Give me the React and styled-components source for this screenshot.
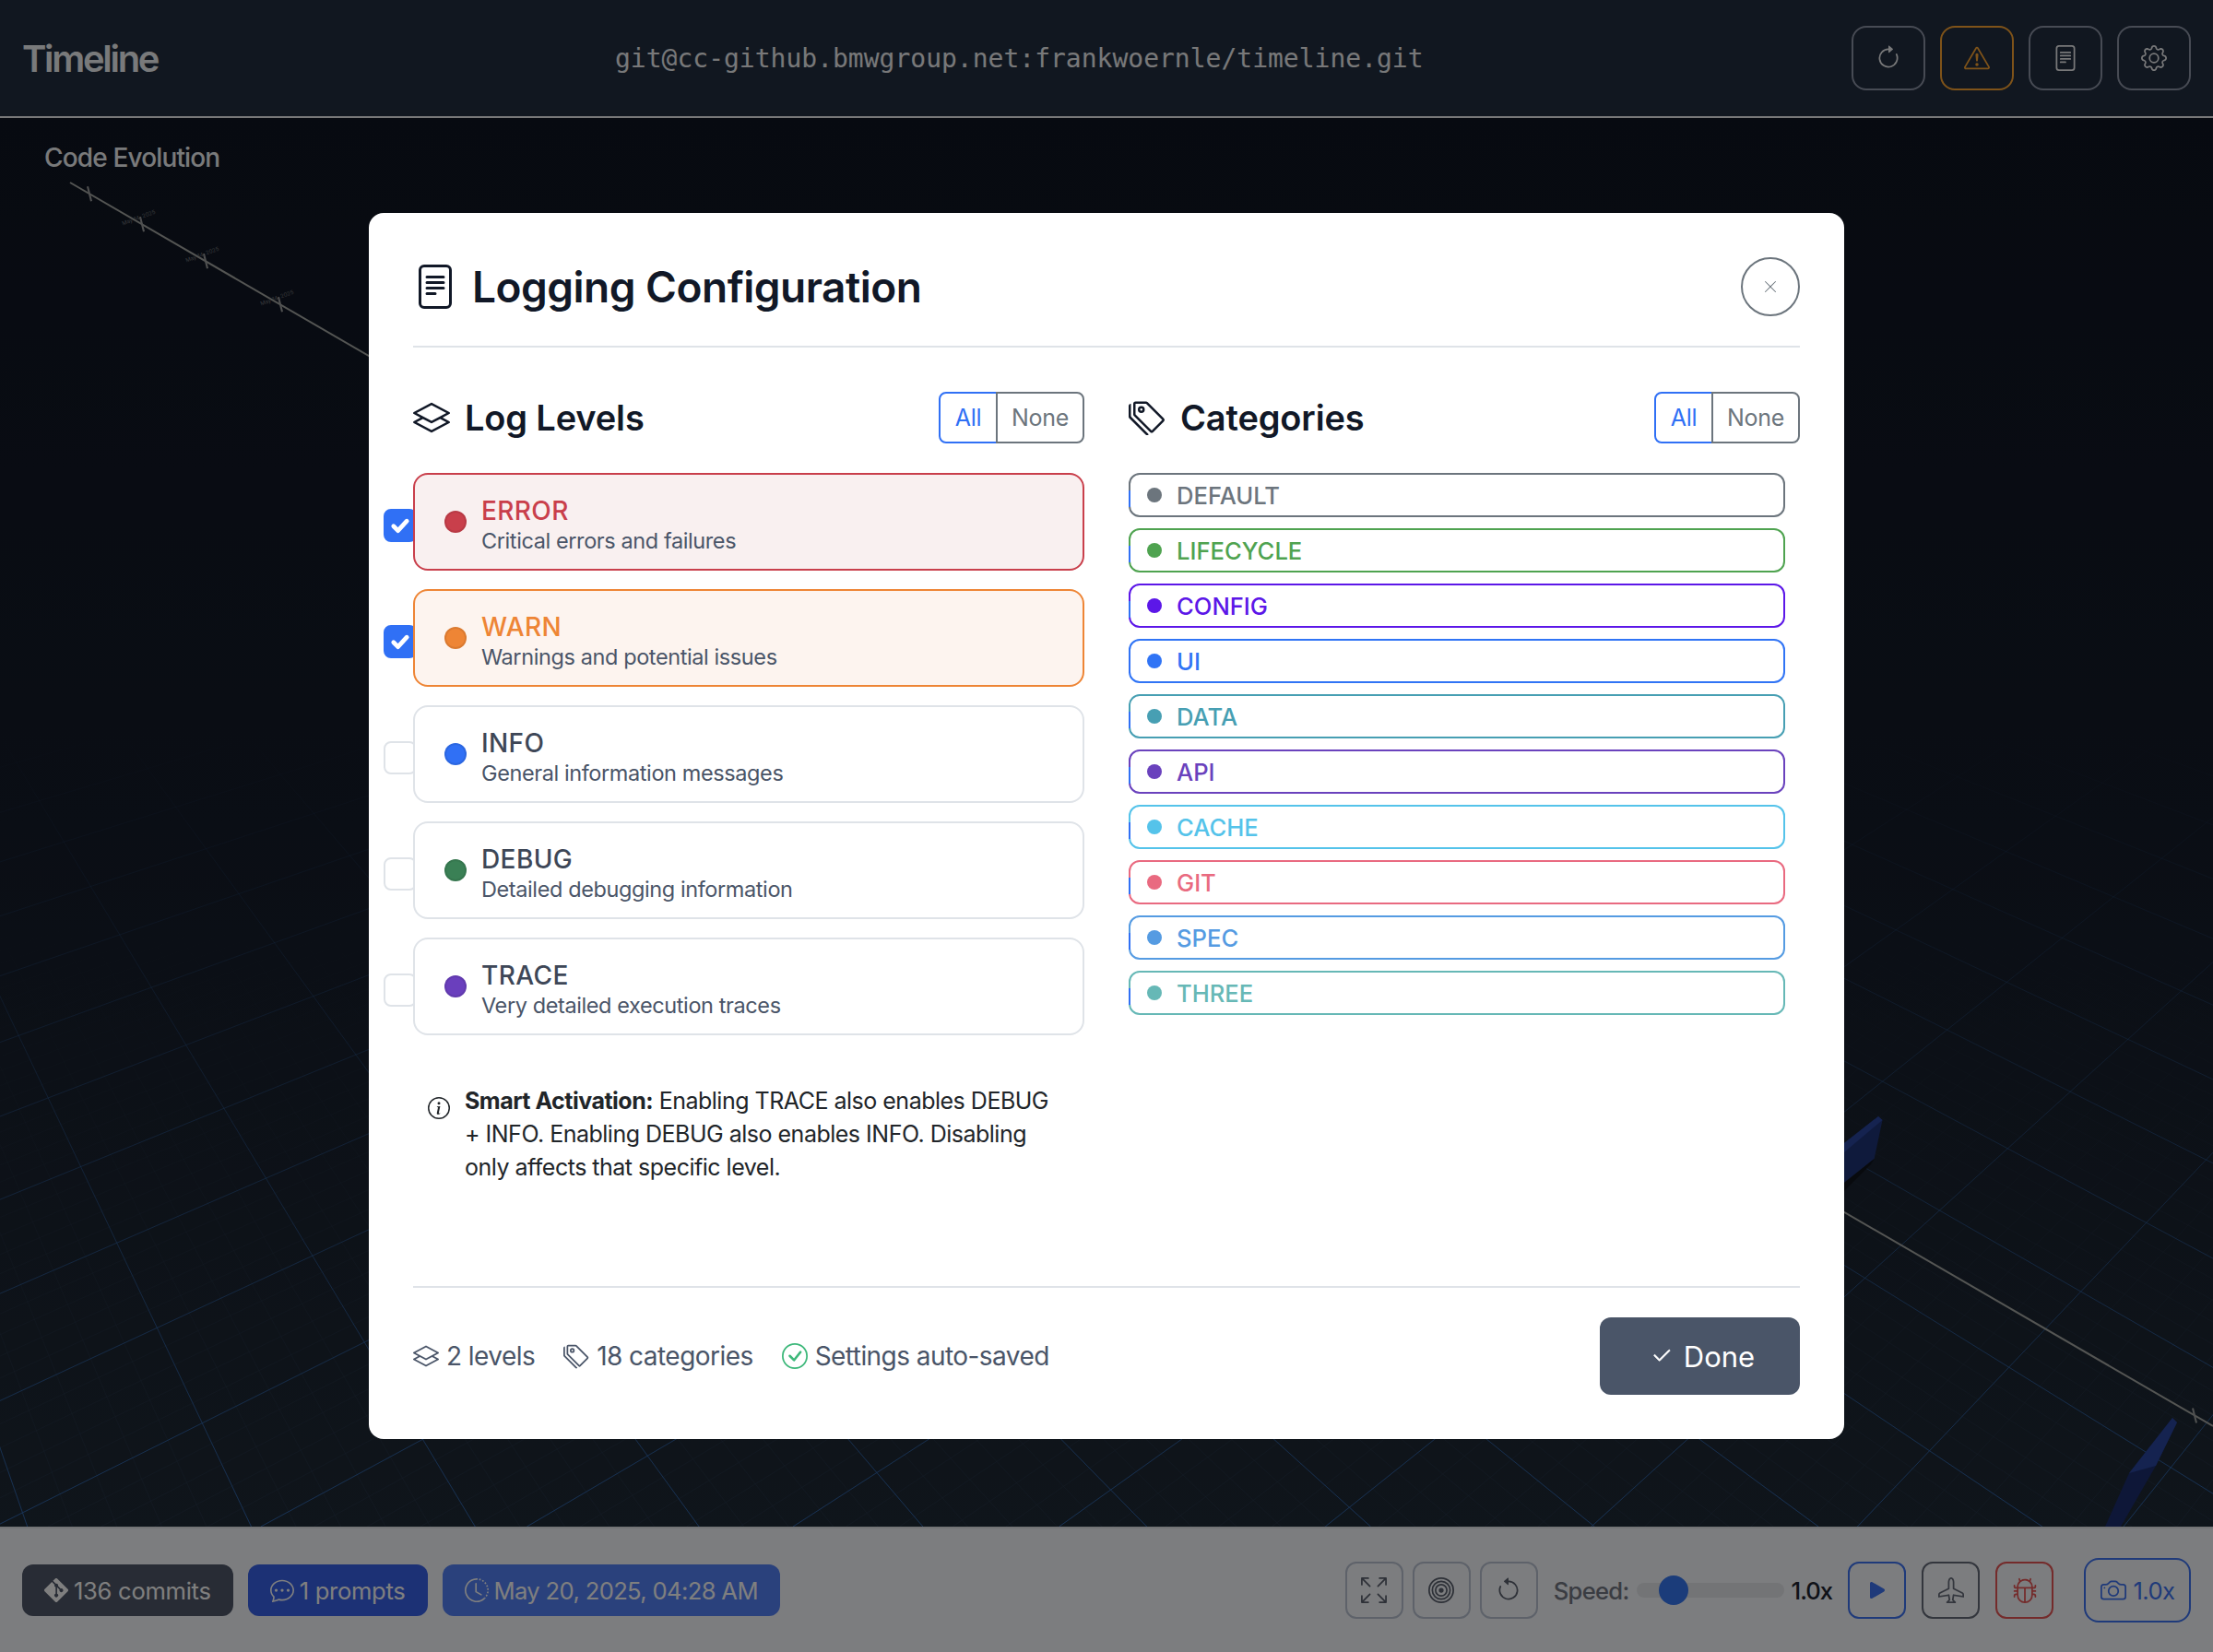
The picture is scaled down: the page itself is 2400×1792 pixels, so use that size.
import React from 'react';
import styled, { createGlobalStyle } from 'styled-components';
import {
  BsArrowClockwise, BsExclamationTriangle, BsFileText, BsGear, BsLayers, BsTags, BsInfoCircle,
  BsCheck2, BsCheckCircle, BsXLg, BsGit, BsChatDots, BsClockHistory, BsArrowsFullscreen, BsBullseye,
  BsArrowCounterclockwise, BsPlayFill, BsAirplane, BsBug, BsCamera,
} from 'react-icons/bs';

const Global = createGlobalStyle`
  *, *::before, *::after { box-sizing: border-box; }
  html, body { margin: 0; padding: 0; background: #0f1522; }
  body { font-family: Inter, "Noto Sans", sans-serif; }
`;

const Page = styled.div`
  width: 2400px; height: 1792px; display: flex; flex-direction: column; overflow: hidden; position: relative;
`;
const Header = styled.header`
  height: 128px; flex: none; display: flex; align-items: center; padding: 0 24px;
  background: #222e40; border-bottom: 2px solid #f0f1f3;
`;
const Brand = styled.h1`
  margin: 0; width: 147px; white-space: nowrap; font-size: 40px; font-weight: 600; letter-spacing: -2.3px; color: #f3f4f6;
`;
const RepoUrl = styled.div`
  margin-left: 496px; font-family: "DejaVu Sans Mono", "Liberation Mono", monospace; font-size: 28px; color: #f0f1f3;
`;
const HeaderActions = styled.div`
  margin-left: auto; display: flex; gap: 16px;
`;
const HeaderButton = styled.div`
  width: 80px; height: 70px; display: flex; align-items: center; justify-content: center;
  border: 2px solid ${p => p.$border || '#8f96a8'}; border-radius: 16px; color: ${p => p.$color || '#f0f1f3'};
`;
const Stage = styled.main`
  flex: 1; position: relative; background: linear-gradient(180deg, #0f1522 0%, #151c2a 50%, #1f2a36 100%);
`;
const StageLabel = styled.div`
  position: absolute; left: 48px; top: 26px; font-size: 28px; line-height: 34px; font-weight: 500; letter-spacing: -0.85px; color: #f3f4f6;
`;
const StageArt = styled.svg`
  position: absolute; inset: 0; width: 100%; height: 100%; display: block;
`;
const BottomBar = styled.footer`
  height: 136px; flex: none; display: flex; align-items: center; justify-content: space-between; padding: 0 24px;
  background: #f8fafe; border-top: 2px solid #e6e8ec;
`;
const PillRow = styled.div`
  display: flex; gap: 16px;
`;
const Pill = styled.div`
  height: 56px; display: flex; align-items: center; gap: 6px; padding: 0 24px; border-radius: 12px;
  background: ${p => p.$bg}; color: #fff; font-size: 25.6px; letter-spacing: -0.3px; white-space: nowrap;
`;
const PillDate = styled(Pill)`
  letter-spacing: -0.65px;
`;
const Controls = styled.div`
  display: flex; align-items: center; gap: 17px;
`;
const ToolGroup = styled.div`
  display: flex; gap: 10px;
`;
const ToolButton = styled.div`
  width: 63px; height: 62px; display: flex; align-items: center; justify-content: center; border-radius: 12px;
  border: 2px solid ${p => p.$border || '#bcc5d4'}; color: ${p => p.$color || '#5c6270'};
`;
const SpeedGroup = styled.div`
  display: flex; align-items: center; gap: 8px; font-size: 25.6px;
`;
const SpeedLabel = styled.span`
  color: #747884; font-weight: 500; letter-spacing: -0.7px;
`;
const SpeedValue = styled.span`
  color: #202430; font-weight: 500; letter-spacing: -1px;
`;
const SliderTrack = styled.div`
  position: relative; width: 160px; height: 16px; border-radius: 8px; background: #e6e8ec;
`;
const SliderThumb = styled.div`
  position: absolute; left: 24px; top: -8px; width: 32px; height: 32px; border-radius: 50%; background: #3678f4;
`;
const CameraButton = styled.div`
  width: 116px; height: 70px; margin-left: 16px; display: flex; align-items: center; justify-content: center; gap: 8px;
  border: 2px solid #3e74f4; border-radius: 16px; color: #3e74f4; font-size: 25.6px; letter-spacing: -0.6px;
`;

const Overlay = styled.div`
  position: fixed; left: 0; top: 0; width: 2400px; height: 1792px; display: flex; align-items: center; justify-content: center;
  background: rgba(0, 0, 0, 0.5);
`;
const Modal = styled.section`
  width: 1600px; height: 1330px; padding: 48px; display: flex; flex-direction: column; background: #fff; border-radius: 16px;
`;
const ModalHead = styled.div`
  display: flex; align-items: center; justify-content: space-between; padding-bottom: 32px; border-bottom: 2px solid #dfe3e8;
`;
const ModalTitle = styled.h2`
  margin: 0; display: flex; align-items: center; gap: 16px; font-size: 46px; font-weight: 600; letter-spacing: -0.5px; color: #111827;
`;
const CloseButton = styled.div`
  width: 64px; height: 64px; display: flex; align-items: center; justify-content: center; border-radius: 50%;
  border: 2px solid #6c757d; color: #6c757d;
`;
const Columns = styled.div`
  margin-top: 48px; display: grid; grid-template-columns: 728px 728px; gap: 48px;
`;
const ColumnHead = styled.div`
  height: 56px; margin-bottom: 32px; display: flex; align-items: center; justify-content: space-between;
`;
const ColumnTitle = styled.h3`
  margin: 0; display: flex; align-items: center; gap: 16px; font-size: 38px; font-weight: 600; letter-spacing: -0.15px; color: #111827;
`;
const Toggle = styled.div`
  display: flex; height: 56px; font-size: 25px; letter-spacing: -0.3px;
`;
const ToggleAll = styled.div`
  width: 64px; display: flex; align-items: center; justify-content: center; color: #3070f5;
  border: 2px solid #3070f5; border-radius: 8px 0 0 8px;
`;
const ToggleNone = styled.div`
  width: 96px; margin-left: -2px; display: flex; align-items: center; justify-content: center; color: #6c757d;
  border: 2px solid #6c757d; border-radius: 0 8px 8px 0;
`;
const LevelList = styled.div`
  display: flex; flex-direction: column; gap: 20px;
`;
const LevelRow = styled.div`
  position: relative;
`;
const Checkbox = styled.div`
  position: absolute; left: -32px; top: 39px; width: 36px; height: 36px; border-radius: 8px;
  display: flex; align-items: center; justify-content: center;
  background: ${p => (p.$on ? '#3070f5' : '#fff')}; border: 2px solid ${p => (p.$on ? '#3070f5' : '#dfe3e8')};
`;
const LevelCard = styled.div`
  position: relative; height: 106px; display: flex; align-items: center; gap: 16px; padding: 0 32px;
  border-radius: 16px; border: 2px solid ${p => (p.$on ? p.$color : '#dfe3e8')}; background: ${p => (p.$on ? p.$tint : '#fff')};
`;
const LevelDot = styled.span`
  width: 24px; height: 24px; flex: none; border-radius: 50%; background: ${p => p.$color}; border: 2px solid rgba(0, 0, 0, 0.08);
`;
const LevelText = styled.div`
  display: flex; flex-direction: column; padding-top: 6px;
`;
const LevelName = styled.div`
  font-size: 28px; line-height: 36px; font-weight: 500; letter-spacing: 0.4px; color: ${p => (p.$on ? p.$color : '#3e4757')};
`;
const LevelDesc = styled.div`
  font-size: 23.5px; line-height: 30px; letter-spacing: -0.4px; color: #4a5568;
`;
const InfoNote = styled.div`
  margin-top: 53px; padding: 0 26px 0 16px; display: flex; gap: 16px; color: #212529; font-size: 25px; line-height: 36px; letter-spacing: -0.5px;
`;
const InfoIcon = styled.span`
  flex: none; margin-top: 14px; height: 24px; display: flex; color: #212529;
`;
const InfoText = styled.p`
  margin: 0;
  strong { font-weight: 700; }
`;
const CategoryList = styled.div`
  display: flex; flex-direction: column; gap: 12px; padding-right: 16px;
`;
const CategoryItem = styled.div`
  position: relative; height: 48px; display: flex; align-items: center; gap: 16px; padding-left: 18px;
  border: 2px solid ${p => p.$color}; border-radius: 12px; color: ${p => p.$color}; font-size: 25.6px; font-weight: 500;
  &::before {
    content: ''; position: absolute; left: -2px; top: 17px; width: 2px; height: 18px; background: #3070f5;
  }
`;
const CategoryDot = styled.span`
  width: 16px; height: 16px; flex: none; border-radius: 50%; background: ${p => p.$color};
`;
const ModalFoot = styled.div`
  margin-top: auto; padding-top: 32px; border-top: 2px solid #dfe3e8; display: flex; align-items: center; justify-content: space-between;
`;
const Stats = styled.div`
  display: flex; align-items: center; gap: 31px; color: #4a5568; font-size: 28px; letter-spacing: -0.55px;
`;
const Stat = styled.span`
  display: flex; align-items: center; gap: 8px;
  svg { color: ${p => p.$icon || 'inherit'}; }
`;
const DoneButton = styled.div`
  width: 217px; height: 84px; padding-left: 6px; display: flex; align-items: center; justify-content: center; gap: 12px;
  background: #4a5568; color: #fff; border-radius: 12px; font-size: 31px;
  svg { stroke: currentColor; stroke-width: 0.6px; }
`;

const Tick = ({ size = 20 }) => (
  <svg width={size} height={size} viewBox="0 0 20 20" fill="none">
    <path d="M5.5 10.5l3 3 6-6.5" stroke="#fff" strokeWidth="3" strokeLinecap="round" strokeLinejoin="round" />
  </svg>
);

const BOTTOM = 1656, HORIZON = -260;
const range = (a, b) => Array.from({ length: b - a + 1 }, (_, i) => a + i);

function GridLines({ vx, base, step, k0, k1, stroke, width }) {
  return range(k0, k1).map(k => (
    <line key={k} x1={vx} y1={HORIZON} x2={base + k * step} y2={BOTTOM} stroke={stroke} strokeWidth={width} />
  ));
}

const TL = (x) => 198 + (x - 76) * 0.5805;
const TICKS = [97, 154, 223, 304, 2380];
const LABELLED = [154, 223, 304];

function StageBackground() {
  return (
    <StageArt viewBox="0 128 2400 1528" preserveAspectRatio="none">
      <defs>
        <linearGradient id="majorGrid" gradientUnits="userSpaceOnUse" x1="0" y1="800" x2="0" y2="1656">
          <stop offset="0" stopColor="#2a5a9a" stopOpacity="0" />
          <stop offset="0.25" stopColor="#2a5a9a" stopOpacity="0.25" />
          <stop offset="1" stopColor="#2f66ad" stopOpacity="0.95" />
        </linearGradient>
        <linearGradient id="minorGrid" gradientUnits="userSpaceOnUse" x1="0" y1="1000" x2="0" y2="1656">
          <stop offset="0" stopColor="#2a3a50" stopOpacity="0" />
          <stop offset="1" stopColor="#2a3a50" stopOpacity="0.5" />
        </linearGradient>
        <clipPath id="floor"><rect x="0" y="800" width="2400" height="856" /></clipPath>
      </defs>
      <g clipPath="url(#floor)">
        <GridLines vx={-635} base={515.3} step={48.56} k0={-25} k1={100} stroke="url(#minorGrid)" width={1} />
        <GridLines vx={3835} base={571.4} step={57.72} k0={-150} k1={40} stroke="url(#minorGrid)" width={1} />
        <GridLines vx={-635} base={515.3} step={242.8} k0={-5} k1={20} stroke="url(#majorGrid)" width={1} />
        <GridLines vx={3835} base={571.4} step={288.6} k0={-30} k1={8} stroke="url(#majorGrid)" width={1} />
      </g>
      <line x1="76" y1="198" x2="2400" y2="1547" stroke="#a8aaa6" strokeWidth="2" />
      {TICKS.map(x => (
        <line key={x} x1={x - 2} y1={TL(x) - 8} x2={x + 2} y2={TL(x) + 8} stroke="#a0a2a2" strokeWidth="2" />
      ))}
      {LABELLED.map(x => (
        <text key={x} x={x - 20} y={TL(x) - 6} fontSize="6" fill="#74767a" transform={`rotate(-20 ${x} ${TL(x)})`}>May 14, 2025</text>
      ))}
      <polygon points="2000,1240 2037,1211 2041.5,1215 2032.6,1257 2000,1283" fill="#1f3478" />
      <polygon points="2000,1240 2037,1211 2041.5,1215 2000,1250" fill="#2a46a0" />
      <polygon points="2000,1283 2032.6,1257 2029,1263 2000,1292" fill="#10141c" />
      <polygon points="2356,1538 2361,1543 2338,1590 2300,1656 2283,1656 2309,1598" fill="#1c2e70" />
      <polygon points="2356,1538 2361,1543 2338,1590 2309,1598" fill="#2a46a0" />
    </StageArt>
  );
}

const LEVELS = [
  { name: 'ERROR', desc: 'Critical errors and failures', color: '#c93f4b', tint: '#f9f0f0', on: true },
  { name: 'WARN', desc: 'Warnings and potential issues', color: '#ee8535', tint: '#fdf4ef', on: true },
  { name: 'INFO', desc: 'General information messages', color: '#3070f5' },
  { name: 'DEBUG', desc: 'Detailed debugging information', color: '#3a8055' },
  { name: 'TRACE', desc: 'Very detailed execution traces', color: '#6a3fbd' },
];
const CATEGORIES = [
  ['DEFAULT', '#6c757d'], ['LIFECYCLE', '#4fa350'], ['CONFIG', '#5c17e8'], ['UI', '#3074f5'], ['DATA', '#479fb3'],
  ['API', '#6a42bd'], ['CACHE', '#55c3ea'], ['GIT', '#e96a80'], ['SPEC', '#559be2'], ['THREE', '#66b8b6'],
];

export default function App() {
  return (
    <Page>
      <Global />
      <Header>
        <Brand>Timeline</Brand>
        <RepoUrl>git@cc-github.bmwgroup.net:frankwoernle/timeline.git</RepoUrl>
        <HeaderActions>
          <HeaderButton><BsArrowClockwise size={28} /></HeaderButton>
          <HeaderButton $border="#fea632" $color="#fea632"><BsExclamationTriangle size={28} /></HeaderButton>
          <HeaderButton><BsFileText size={28} /></HeaderButton>
          <HeaderButton><BsGear size={28} /></HeaderButton>
        </HeaderActions>
      </Header>
      <Stage>
        <StageBackground />
        <StageLabel>Code Evolution</StageLabel>
      </Stage>
      <BottomBar>
        <PillRow>
          <Pill $bg="#50586a"><BsGit size={26} />136 commits</Pill>
          <Pill $bg="#3862ea"><BsChatDots size={26} />1 prompts</Pill>
          <PillDate $bg="#5482f8"><BsClockHistory size={26} />May 20, 2025, 04:28 AM</PillDate>
        </PillRow>
        <Controls>
          <ToolGroup>
            <ToolButton><BsArrowsFullscreen size={28} /></ToolButton>
            <ToolButton><BsBullseye size={28} /></ToolButton>
            <ToolButton><BsArrowCounterclockwise size={28} /></ToolButton>
          </ToolGroup>
          <SpeedGroup>
            <SpeedLabel>Speed:</SpeedLabel>
            <SliderTrack><SliderThumb /></SliderTrack>
            <SpeedValue>1.0x</SpeedValue>
          </SpeedGroup>
          <ToolButton $border="#3e74f4" $color="#3e74f4"><BsPlayFill size={32} /></ToolButton>
          <ToolButton $border="#666c7a" $color="#666c7a"><BsAirplane size={28} /></ToolButton>
          <ToolButton $border="#e85656" $color="#e85656"><BsBug size={28} /></ToolButton>
          <CameraButton><BsCamera size={28} />1.0x</CameraButton>
        </Controls>
      </BottomBar>
      <Overlay>
        <Modal>
          <ModalHead>
            <ModalTitle><BsFileText size={48} />Logging Configuration</ModalTitle>
            <CloseButton><BsXLg size={16} /></CloseButton>
          </ModalHead>
          <Columns>
            <div>
              <ColumnHead>
                <ColumnTitle><BsLayers size={40} />Log Levels</ColumnTitle>
                <Toggle><ToggleAll>All</ToggleAll><ToggleNone>None</ToggleNone></Toggle>
              </ColumnHead>
              <LevelList>
                {LEVELS.map(l => (
                  <LevelRow key={l.name}>
                    <Checkbox $on={l.on}>{l.on && <Tick size={36} />}</Checkbox>
                    <LevelCard $on={l.on} $color={l.color} $tint={l.tint}>
                      <LevelDot $color={l.color} />
                      <LevelText>
                        <LevelName $on={l.on} $color={l.color}>{l.name}</LevelName>
                        <LevelDesc>{l.desc}</LevelDesc>
                      </LevelText>
                    </LevelCard>
                  </LevelRow>
                ))}
              </LevelList>
              <InfoNote>
                <InfoIcon><BsInfoCircle size={24} /></InfoIcon>
                <InfoText>
                  <strong>Smart Activation:</strong> Enabling TRACE also enables DEBUG + INFO. Enabling DEBUG also enables INFO. Disabling only affects that specific level.
                </InfoText>
              </InfoNote>
            </div>
            <div>
              <ColumnHead>
                <ColumnTitle><BsTags size={40} />Categories</ColumnTitle>
                <Toggle><ToggleAll>All</ToggleAll><ToggleNone>None</ToggleNone></Toggle>
              </ColumnHead>
              <CategoryList>
                {CATEGORIES.map(([name, color]) => (
                  <CategoryItem key={name} $color={color}>
                    <CategoryDot $color={color} />
                    {name}
                  </CategoryItem>
                ))}
              </CategoryList>
            </div>
          </Columns>
          <ModalFoot>
            <Stats>
              <Stat><BsLayers size={28} />2 levels</Stat>
              <Stat><BsTags size={28} />18 categories</Stat>
              <Stat $icon="#3db87a"><BsCheckCircle size={28} />Settings auto-saved</Stat>
            </Stats>
            <DoneButton><BsCheck2 size={24} />Done</DoneButton>
          </ModalFoot>
        </Modal>
      </Overlay>
    </Page>
  );
}
